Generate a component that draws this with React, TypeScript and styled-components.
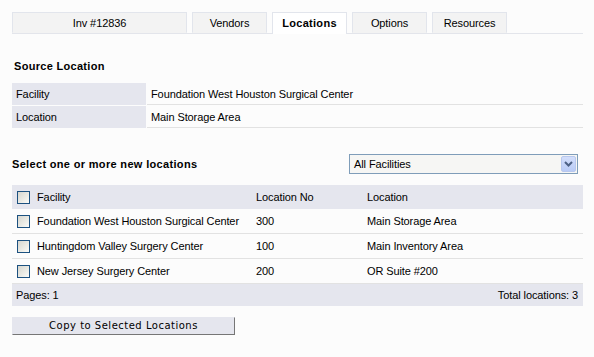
import React from "react";
import styled, { createGlobalStyle } from "styled-components";

const GlobalStyle = createGlobalStyle`
  html, body {
    margin: 0;
    padding: 0;
    background: #fcfcfc;
  }
  body {
    font-family: "Liberation Sans", Arial, sans-serif;
    font-size: 11px;
    letter-spacing: -0.1px;
    color: #000;
  }
  * { box-sizing: border-box; }
`;

const Page = styled.div`
  width: 583px;
  padding: 12px 0 0 12px;
`;

const TabStrip = styled.div`
  display: flex;
  gap: 5px;
  height: 22px;
  border-bottom: 1px solid #e3e5eb;
`;

const Tab = styled.div<{ $active?: boolean; $wide?: boolean }>`
  width: ${(p) => (p.$wide ? "175px" : "75px")};
  height: ${(p) => (p.$active ? "22px" : "21px")};
  background: ${(p) => (p.$active ? "#ffffff" : "#f3f3f3")};
  border: 1px solid #e2e5ec;
  border-bottom: ${(p) => (p.$active ? "none" : "1px solid #f3f3f3")};
  text-align: center;
  padding-top: 4px;
  line-height: 13px;
  font-weight: ${(p) => (p.$active ? "bold" : "normal")};
  letter-spacing: ${(p) => (p.$active ? "0.3px" : "-0.1px")};
  color: #000;
`;

const SectionTitle = styled.div`
  margin-top: 25px;
  padding-left: 2px;
  font-weight: bold;
  letter-spacing: 0.3px;
  line-height: 14px;
`;

const InfoTable = styled.div`
  margin-top: 10px;
  display: grid;
  grid-template-columns: 134px 1fr;
  column-gap: 1px;
  row-gap: 1px;
`;

const InfoLabel = styled.div`
  height: 22px;
  background: #e5e6ee;
  padding-left: 4px;
  display: flex;
  align-items: center;
`;

const InfoValue = styled.div`
  height: 22px;
  border-bottom: 1px solid #e2e2e2;
  padding-left: 4px;
  display: flex;
  align-items: center;
`;

const SelectBar = styled.div`
  margin-top: 26px;
  display: flex;
  align-items: center;
  justify-content: space-between;
  padding-right: 5px;
`;

const SelectTitle = styled.div`
  font-weight: bold;
  letter-spacing: 0.33px;
  line-height: 14px;
`;

const FakeSelect = styled.div`
  width: 229px;
  height: 20px;
  border: 1px solid #7f9db9;
  background: #f6f6f4;
  display: flex;
  align-items: center;
  padding: 0 1px 0 4px;
`;

const SelectText = styled.span`
  flex: 1;
  font-size: 11px;
`;

const ArrowButton = styled.span`
  width: 15px;
  height: 16px;
  border: 1px solid #b8c8ee;
  border-radius: 2px;
  background: linear-gradient(180deg, #d3defb 0%, #b9cbf6 100%);
  display: flex;
  align-items: center;
  justify-content: center;
`;

const Grid = styled.div`
  margin-top: 11px;
`;

const GridRow = styled.div<{ $header?: boolean }>`
  display: grid;
  grid-template-columns: 239px 111px 1fr;
  align-items: center;
  padding-left: 5px;
  height: ${(p) => (p.$header ? "24px" : "25px")};
  background: ${(p) => (p.$header ? "#e5e6ee" : "transparent")};
  border-bottom: ${(p) => (p.$header ? "none" : "1px solid #e2e2e2")};
`;

const CheckCell = styled.div`
  display: flex;
  align-items: center;
  gap: 7px;
`;

const Box = styled.span`
  width: 13px;
  height: 13px;
  border: 1px solid #1c5180;
  background: linear-gradient(135deg, #d6d6cf 0%, #ececE6 60%, #fbfbf9 100%);
  display: inline-block;
  flex: none;
`;

const Footer = styled.div`
  height: 22px;
  background: #e5e6ee;
  display: flex;
  align-items: center;
  justify-content: space-between;
  padding: 0 5px 0 4px;
`;

const CopyButton = styled.button`
  margin-top: 11px;
  width: 223px;
  height: 18px;
  background: #e5e6ee;
  border: 1px solid;
  border-color: #e5e6ee #767676 #767676 #e5e6ee;
  font-family: "DejaVu Sans", Verdana, sans-serif;
  font-size: 10px;
  letter-spacing: 0.5px;
  color: #000;
  padding: 0;
  line-height: 14px;
  display: block;
`;

const rows = [
  { facility: "Foundation West Houston Surgical Center", no: "300", location: "Main Storage Area" },
  { facility: "Huntingdom Valley Surgery Center", no: "100", location: "Main Inventory Area" },
  { facility: "New Jersey Surgery Center", no: "200", location: "OR Suite #200" },
];

export default function App() {
  return (
    <>
      <GlobalStyle />
      <Page>
        <TabStrip>
          <Tab $wide>Inv #12836</Tab>
          <Tab>Vendors</Tab>
          <Tab $active>Locations</Tab>
          <Tab>Options</Tab>
          <Tab>Resources</Tab>
        </TabStrip>

        <SectionTitle>Source Location</SectionTitle>
        <InfoTable>
          <InfoLabel>Facility</InfoLabel>
          <InfoValue>Foundation West Houston Surgical Center</InfoValue>
          <InfoLabel>Location</InfoLabel>
          <InfoValue>Main Storage Area</InfoValue>
        </InfoTable>

        <SelectBar>
          <SelectTitle>Select one or more new locations</SelectTitle>
          <FakeSelect>
            <SelectText>All Facilities</SelectText>
            <ArrowButton>
              <svg width="9" height="6" viewBox="0 0 9 6">
                <path d="M1 1 L4.5 4.5 L8 1" fill="none" stroke="#4d6185" strokeWidth="2" />
              </svg>
            </ArrowButton>
          </FakeSelect>
        </SelectBar>

        <Grid>
          <GridRow $header>
            <CheckCell>
              <Box />
              <span>Facility</span>
            </CheckCell>
            <span>Location No</span>
            <span>Location</span>
          </GridRow>
          {rows.map((r) => (
            <GridRow key={r.facility}>
              <CheckCell>
                <Box />
                <span>{r.facility}</span>
              </CheckCell>
              <span>{r.no}</span>
              <span>{r.location}</span>
            </GridRow>
          ))}
          <Footer>
            <span>Pages: 1</span>
            <span>Total locations: 3</span>
          </Footer>
        </Grid>

        <CopyButton>Copy to Selected Locations</CopyButton>
      </Page>
    </>
  );
}
